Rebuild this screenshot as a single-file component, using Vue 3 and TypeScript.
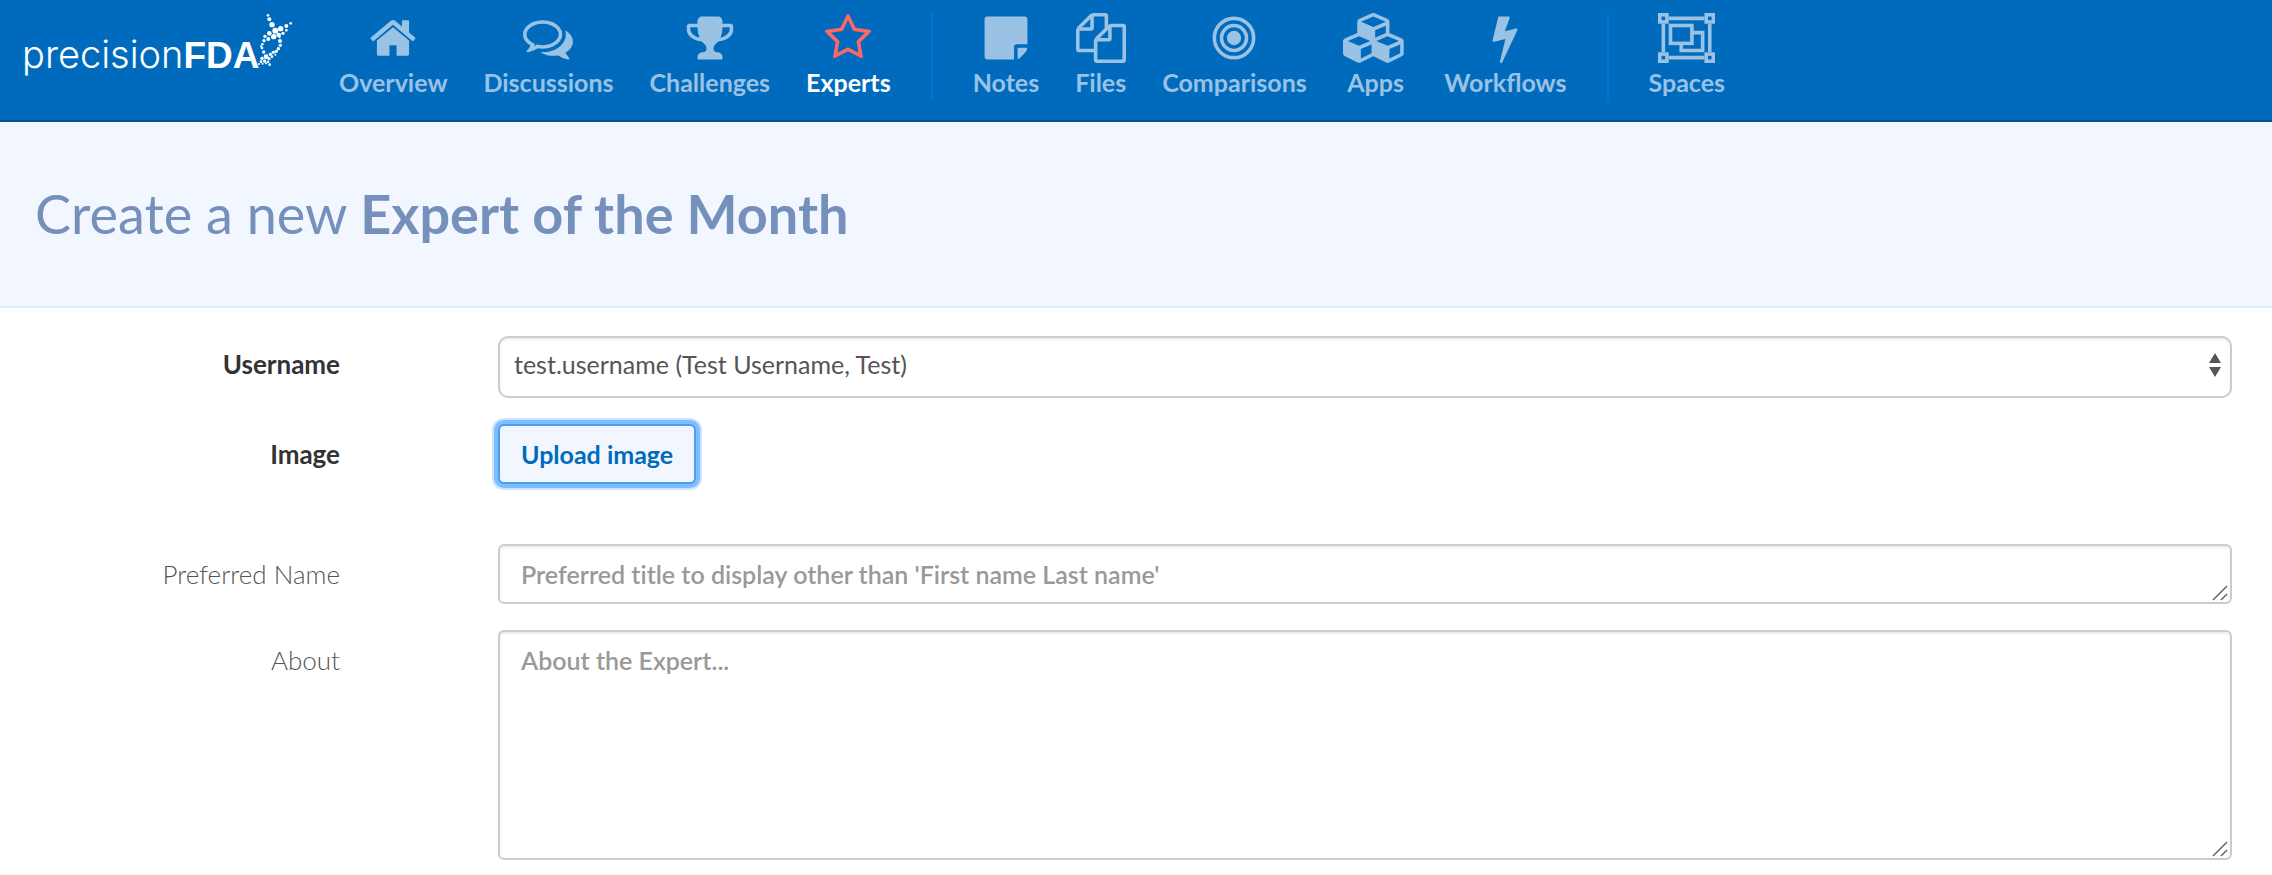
<script setup lang="ts">
import { ref } from 'vue'

interface Circle { cx: number; cy: number; r: number; w?: number }
interface Box { x: number; y: number; w: number; h: number }
interface NavItem {
  label: string
  width: number
  path?: string
  circles?: Circle[]
  boxes?: Box[]
  active?: boolean
}

const groups: NavItem[][] = [
  [
    { label: 'Overview', width: 1792, path: 'M1472 992v480q0 26-19 45t-45 19h-384v-384h-256v384h-384q-26 0-45-19t-19-45v-480q0-1 .5-3t.5-3l575-474 575 474q1 2 1 6zm223-69l-62 74q-8 9-21 11h-3q-13 0-21-7l-692-577-692 577q-12 8-24 7-13-2-21-11l-62-74q-8-10-7-23.5t11-21.5l719-599q32-26 76-26t76 26l244 204v-195q0-14 9-23t23-9h192q14 0 23 9t9 23v408l219 182q10 8 11 21.5t-7 23.5z' },
    { label: 'Discussions', width: 1792, path: 'M704 384q-153 0-286 52t-211.5 141-78.5 191q0 82 53 158t149 132l97 56-35 84q34-20 62-39l44-31 53 10q78 14 153 14 153 0 286-52t211.5-141 78.5-191-78.5-191-211.5-141-286-52zm0-128q191 0 353.5 68.5t256.5 186.5 94 257-94 257-256.5 186.5-353.5 68.5q-86 0-176-16-124 88-278 128-36 9-86 16h-3q-11 0-20.5-8t-11.5-21q-1-3-1-6.5t.5-6.5 2-6l2.5-5 3.5-5.5 4-5 4.5-5 4-4.5q5-6 23-25t26-29.5 22.5-29 25-38.5 20.5-44q-124-72-195-177t-71-224q0-139 94-257t256.5-186.5 353.5-68.5zm822 1169q10 24 20.5 44t25 38.5 22.5 29 26 29.5 23 25q1 1 4 4.5t4.5 5 4 5 3.5 5.5l2.5 5 2 6 .5 6.5-1 6.5q-3 14-13 22t-22 7q-50-7-86-16-154-40-278-128-90 16-176 16-271 0-472-132 58 4 88 4 161 0 309-45t264-129q125-92 192-212t67-254q0-77-23-152 129 71 204 178t75 230q0 120-71 224.5t-195 176.5z' },
    { label: 'Challenges', width: 1792, path: 'M522 883q-74-162-74-371h-256v96q0 78 94.5 162t235.5 113zm1078-275v-96h-256q0 209-74 371 141-29 235.5-113t94.5-162zm128-128v128q0 71-41.5 143t-112 130-173 97.5-215.5 44.5q-42 54-95 95-38 34-52.5 72.5t-14.5 89.5q0 54 30.5 91t97.5 37q75 0 133.5 45.5t58.5 114.5v64q0 14-9 23t-23 9h-832q-14 0-23-9t-9-23v-64q0-69 58.5-114.5t133.5-45.5q67 0 97.5-37t30.5-91q0-51-14.5-89.5t-52.5-72.5q-53-41-95-95-113-5-215.5-44.5t-173-97.5-112-130-41.5-143v-128q0-40 28-68t68-28h288v-96q0-66 47-113t113-47h576q66 0 113 47t47 113v96h288q40 0 68 28t28 68z' },
    { label: 'Experts', width: 1792, active: true, path: 'M1201 1004l306-297-422-62-189-382-189 382-422 62 306 297-73 421 378-199 377 199zm527-357q0 22-26 48l-363 354 86 500q1 7 1 20 0 50-41 50-19 0-40-12l-449-236-449 236q-22 12-40 12-21 0-31.5-14.5t-10.5-35.5q0-6 2-20l86-500-364-354q-25-27-25-48 0-37 56-46l502-73 225-455q19-41 49-41t49 41l225 455 502 73q56 9 56 46z' },
  ],
  [
    { label: 'Notes', width: 1792, path: 'M1664 1120h-384q-40 0-68 28t-28 68v448h-960q-40 0-68-28t-28-68v-1344q0-40 28-68t68-28h1344q40 0 68 28t28 68v896zm-352 128h352q-18 110-96 188l-132 132q-62 70-124 94v-414z' },
    { label: 'Files', width: 1792, path: 'M1696 384q40 0 68 28t28 68v1216q0 40-28 68t-68 28h-960q-40 0-68-28t-28-68v-288h-544q-40 0-68-28t-28-68v-672q0-40 20-88t48-76l408-408q28-28 76-48t88-20h416q40 0 68 28t28 68v328q68-40 128-40h416zm-544 213l-299 299h299v-299zm-640-384l-299 299h299v-299zm196 647l316-316v-416h-384v416q0 40-28 68t-68 28h-416v640h512v-256q0-40 20-88t48-76zm956 804v-1152h-384v416q0 40-28 68t-68 28h-416v640h896z' },
    { label: 'Comparisons', width: 1792, circles: [
      { cx: 896, cy: 896, r: 704, w: 128 },
      { cx: 896, cy: 896, r: 448, w: 128 },
      { cx: 896, cy: 896, r: 256 },
    ] },
    { label: 'Apps', width: 2304, path: 'M640 1632l384-192v-314l-384 164v342zm-64-454l404-173-404-173-404 173zm1088 454l384-192v-314l-384 164v342zm-64-454l404-173-404-173-404 173zm-448-293l384-165v-266l-384 164v267zm-64-379l441-189-441-189-441 189zm1088 518v416q0 36-19 67t-52 47l-448 224q-25 14-57 14t-57-14l-448-224q-4-2-7-4-2 2-7 4l-448 224q-25 14-57 14t-57-14l-448-224q-33-16-52-47t-19-67v-416q0-38 21.5-70t56.5-48l434-186v-400q0-38 21.5-70t56.5-48l448-192q23-10 50-10t50 10l448 192q35 16 56.5 48t21.5 70v400l434 186q36 16 57 48t21 70z' },
    { label: 'Workflows', width: 1792, path: 'M1333 566q18 20 7 44l-540 1157q-13 25-42 25-4 0-14-2-17-5-25.5-19t-4.5-30l197-808-406 101q-4 1-12 1-18 0-31-11-18-15-13-39l201-825q4-14 16-23t28-9h328q19 0 32 12.5t13 29.5q0 8-5 18l-171 463 396-98q8-2 12-2 19 0 34 15z' },
  ],
  [
    { label: 'Spaces', width: 2048, path: 'M384 128h1280v128h-1280zM384 1536h1280v128h-1280zM128 384h128v1024h-128zM1792 384h128v1024h-128z', boxes: [
      { x: 64, y: 64, w: 256, h: 256 },
      { x: 1728, y: 64, w: 256, h: 256 },
      { x: 64, y: 1472, w: 256, h: 256 },
      { x: 1728, y: 1472, w: 256, h: 256 },
      { x: 448, y: 448, w: 768, h: 640 },
    ] },
  ],
]

// Dots of the DNA strand beside the wordmark: x, y, radius
const helix: [number, number, number][] = [
  [54, 22, 4], [58, 34, 6], [66, 50, 8], [76, 68, 9], [92, 62, 8], [109, 54, 6], [122, 46, 4],
  [58, 76, 7], [45, 85, 5], [71, 86, 8], [86, 81, 7], [99, 76, 5], [109, 67, 4],
  [55, 93, 6], [42, 98, 5], [37, 109, 4], [36, 120, 4], [41, 132, 5], [33, 115, 3],
  [90, 99, 6], [91, 112, 5], [85, 122, 5], [79, 130, 5], [70, 133, 5], [61, 139, 5], [89, 88, 3],
  [48, 146, 7], [36, 151, 5], [57, 152, 5], [44, 159, 5], [33, 161, 4], [66, 146, 4],
  [27, 168, 3], [38, 167, 3], [54, 162, 4], [59, 170, 4], [48, 166, 3], [76, 140, 3],
]

const members = ['test.username (Test Username, Test)']
const username = ref(members[0])
const preferredName = ref('')
const about = ref('')
</script>

<template>
  <div class="page">
    <header class="navbar">
      <a class="brand" href="#" aria-label="precisionFDA">
        <span class="brand-thin">precision</span><span class="brand-bold">FDA</span>
        <svg class="helix" viewBox="0 0 150 192" aria-hidden="true">
          <circle v-for="([x, y, r], i) in helix" :key="i" :cx="x" :cy="y" :r="r" />
        </svg>
      </a>
      <nav class="menu">
        <ul v-for="(group, g) in groups" :key="g" class="group">
          <li v-for="item in group" :key="item.label">
            <a href="#" class="item" :class="{ active: item.active }">
              <svg class="icon" :viewBox="`0 0 ${item.width} 1792`" aria-hidden="true">
                <path v-if="item.path" :d="item.path" />
                <circle v-for="(c, i) in item.circles" :key="'c' + i" :cx="c.cx" :cy="c.cy" :r="c.r" :class="{ line: c.w }" />
                <rect v-for="(b, i) in item.boxes" :key="'b' + i" :x="b.x" :y="b.y" :width="b.w" :height="b.h" class="line" />
                <path v-if="item.boxes" class="line" d="M1216 704h384v640h-768v-256" />
              </svg>
              <span>{{ item.label }}</span>
            </a>
          </li>
        </ul>
      </nav>
    </header>

    <section class="banner">
      <h1>Create a new <strong>Expert of the Month</strong></h1>
    </section>

    <form class="form" @submit.prevent>
      <div class="row select-row">
        <label class="strong" for="username">Username</label>
        <div class="field">
          <select id="username" v-model="username">
            <option v-for="m in members" :key="m">{{ m }}</option>
          </select>
          <svg class="arrows" viewBox="0 0 12 24" aria-hidden="true"><path d="M0 10L6 0L12 10zM0 14H12L6 24z" /></svg>
        </div>
      </div>
      <div class="row upload">
        <label class="strong" for="image">Image</label>
        <div class="field"><button id="image" type="button">Upload image</button></div>
      </div>
      <div class="row">
        <label for="preferred">Preferred Name</label>
        <div class="field">
          <textarea id="preferred" v-model="preferredName" class="short" rows="1" placeholder="Preferred title to display other than 'First name Last name'"></textarea>
          <svg class="grip" viewBox="0 0 16 16" aria-hidden="true"><path d="M1 15L15 1M9 15L15 9" /></svg>
        </div>
      </div>
      <div class="row">
        <label for="about">About</label>
        <div class="field">
          <textarea id="about" v-model="about" class="tall" placeholder="About the Expert..."></textarea>
          <svg class="grip" viewBox="0 0 16 16" aria-hidden="true"><path d="M1 15L15 1M9 15L15 9" /></svg>
        </div>
      </div>
    </form>
  </div>
</template>

<style>
body {
  margin: 0;
  background: #fff;
}
</style>

<style scoped>
.page {
  font-family: Lato, "Liberation Sans", sans-serif;
  font-size: 25px;
  line-height: 36px;
  color: #333;
}
.navbar {
  display: flex;
  align-items: flex-start;
  height: 120px;
  background: #006bbd;
  border-bottom: 2px solid #07528f;
}
.brand {
  position: relative;
  display: flex;
  align-items: baseline;
  box-sizing: border-box;
  width: 299px;
  padding: 31px 0 0 22px;
  color: #fff;
  text-decoration: none;
  font-size: 37px;
  line-height: 46px;
}
.brand-thin {
  font-family: Inter, sans-serif;
  font-size: 38px;
  font-weight: 300;
}
.brand-bold {
  font-family: "Liberation Sans", Arial, sans-serif;
  font-weight: 700;
}
.helix {
  position: absolute;
  left: 250px;
  top: 8px;
  width: 50px;
  height: 64px;
  fill: #fff;
}
.menu {
  display: flex;
  padding-top: 13px;
}
.group {
  display: flex;
  gap: 36px;
  margin: 0;
  padding: 0 40px;
  list-style: none;
}
.group + .group {
  border-left: 2px solid #0077d4;
}
.item {
  display: flex;
  flex-direction: column;
  align-items: center;
  height: 87px;
  color: #99c2e5;
  text-decoration: none;
  font-weight: 700;
}
.item span {
  margin-top: 1px;
}
.icon {
  height: 51px;
  fill: currentColor;
}
.line {
  fill: none;
  stroke: currentColor;
  stroke-width: 128px;
}
.item.active {
  color: #fff;
}
.active .icon {
  color: #ff6666;
}
.banner {
  padding: 60px 35px;
  background: #f2f7ff;
  border-bottom: 2px solid #e1ecf9;
}
h1 {
  margin: 0;
  font-size: 54px;
  line-height: 64px;
  font-weight: 400;
  color: #7590bb;
}
.form {
  display: grid;
  gap: 26px;
  padding: 28px 40px 15px;
}
.row {
  display: grid;
  grid-template-columns: 300px 1fr;
  column-gap: 158px;
}
.upload {
  margin-bottom: 34px;
}
label {
  padding-top: 12px;
  text-align: right;
  font-size: 26px;
  font-weight: 300;
  color: #555;
}
label.strong {
  font-weight: 700;
  color: #333;
}
.select-row label {
  padding-top: 10px;
}
.field {
  position: relative;
  display: flex;
}
select,
textarea {
  box-sizing: border-box;
  width: 100%;
  margin: 0;
  font: inherit;
  color: #555;
  background: #fff;
  border: 2px solid #ccc;
  box-shadow: inset 0 2px 2px rgba(0, 0, 0, 0.075);
  outline: none;
}
select {
  appearance: none;
  height: 62px;
  padding: 0 40px 6px 14px;
  border-radius: 10px;
}
.arrows {
  position: absolute;
  right: 11px;
  top: 17px;
  width: 12px;
  height: 24px;
  fill: #555;
}
textarea {
  display: block;
  padding: 10px 21px;
  border-radius: 6px;
  resize: none;
  overflow: hidden;
  font-variant-ligatures: no-common-ligatures;
}
textarea::placeholder {
  color: #999;
  font-weight: 600;
  opacity: 1;
}
.short {
  height: 60px;
}
.tall {
  height: 230px;
}
.grip {
  position: absolute;
  right: 4px;
  bottom: 3px;
  width: 16px;
  height: 16px;
  fill: none;
  stroke: #666;
  stroke-width: 1.5;
}
button {
  height: 60px;
  padding: 0 21px;
  font: inherit;
  font-weight: 700;
  color: #006bbd;
  background: #f2f7ff;
  border: 2px solid #4a9ff0;
  border-radius: 6px;
  box-shadow: 0 0 0 4px #80bdff, 0 0 0 6px #cce4ff;
}
</style>
